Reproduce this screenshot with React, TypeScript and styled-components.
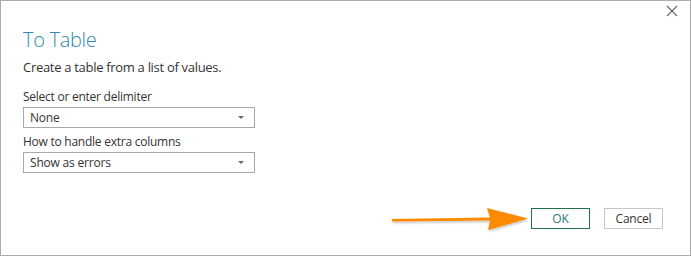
import React from "react"
import styled, { createGlobalStyle } from "styled-components"

const GlobalStyle = createGlobalStyle`
  html, body {
    margin: 0;
    padding: 0;
    background: #ffffff;
  }
  body {
    font-family: "Segoe UI", "Open Sans", "Noto Sans", sans-serif;
  }
`

type SelectProps = {
  value: string,
}

function Select({ value }: SelectProps): JSX.Element {
  return (
    <SelectBox>
      <SelectValue>{value}</SelectValue>
      <Caret />
    </SelectBox>
  )
}

function CloseIcon(): JSX.Element {
  return (
    <svg width="12" height="12" viewBox="0 0 12 12">
      <path d="M1 1 L11 11 M11 1 L1 11" stroke="#6f6f6f" strokeWidth="1.3" fill="none" />
    </svg>
  )
}

function PointerArrow(): JSX.Element {
  return (
    <ArrowSvg width="150" height="40" viewBox="0 0 150 40">
      <defs>
        <filter id="arrow-shadow" x="-10%" y="-40%" width="120%" height="180%">
          <feDropShadow dx="1" dy="1.5" stdDeviation="1.2" floodColor="#000" floodOpacity="0.25" />
        </filter>
      </defs>
      <path
        d="M2 19 L100 17.6 L97 8 L138 18.5 L98 30 L100 20.6 L2 21.4 Z"
        fill="#fd8a00"
        filter="url(#arrow-shadow)"
      />
    </ArrowSvg>
  )
}

export default function App(): JSX.Element {
  return (
    <>
      <GlobalStyle />
      <Dialog>
        <CloseButton aria-label="Close">
          <CloseIcon />
        </CloseButton>
        <Body>
          <Title>To Table</Title>
          <Description>Create a table from a list of values.</Description>
          <Fields>
            <Field>
              <Label>Select or enter delimiter</Label>
              <Select value="None" />
            </Field>
            <Field>
              <Label>How to handle extra columns</Label>
              <Select value="Show as errors" />
            </Field>
          </Fields>
        </Body>
        <Footer>
          <PointerArrow />
          <Button primary>OK</Button>
          <Button>Cancel</Button>
        </Footer>
      </Dialog>
    </>
  )
}

const Dialog = styled.div`
  position: relative;
  box-sizing: border-box;
  width: 691px;
  height: 256px;
  border: 1px solid #acacac;
  background: #ffffff;
  display: flex;
  flex-direction: column;
  justify-content: space-between;
  color: #333333;
`

const CloseButton = styled.div`
  position: absolute;
  top: 4px;
  right: 12px;
  width: 12px;
  height: 12px;
  display: flex;
`

const Body = styled.div`
  padding: 25px 0 0 22px;
  display: flex;
  flex-direction: column;
`

const Title = styled.h1`
  margin: 0;
  font-size: 20px;
  font-weight: 300;
  line-height: 27px;
  color: #2f89b0;
  letter-spacing: -0.3px;
`

const Description = styled.p`
  margin: 5px 0 0;
  font-size: 13px;
  line-height: 18px;
  letter-spacing: -0.3px;
  color: #333333;
`

const Fields = styled.div`
  margin-top: 13px;
  display: flex;
  flex-direction: column;
  gap: 6px;
`

const Field = styled.div`
  display: flex;
  flex-direction: column;
  gap: 2px;
`

const Label = styled.label`
  font-size: 12px;
  line-height: 16px;
  letter-spacing: -0.25px;
  color: #333333;
`

const SelectBox = styled.div`
  box-sizing: border-box;
  width: 232px;
  height: 21px;
  border: 1px solid #a9a9a9;
  display: flex;
  align-items: center;
  justify-content: space-between;
  padding: 0 10px 0 6px;
`

const SelectValue = styled.span`
  font-size: 12px;
  letter-spacing: -0.2px;
  color: #333333;
`

const Caret = styled.span`
  width: 0;
  height: 0;
  border-left: 3px solid transparent;
  border-right: 3px solid transparent;
  border-top: 3px solid #6a6a6a;
`

const Footer = styled.div`
  display: flex;
  align-items: center;
  justify-content: flex-end;
  gap: 14px;
  padding: 0 27px 26px 0;
`

const ArrowSvg = styled.svg`
  position: absolute;
  left: 389px;
  top: 199px;
`

const Button = styled.div<{ primary?: boolean }>`
  box-sizing: border-box;
  width: 59px;
  height: 21px;
  display: flex;
  align-items: center;
  justify-content: center;
  border: 1px solid ${(p) => (p.primary ? "#217346" : "#c6c6c6")};
  font-size: 12px;
  letter-spacing: -0.2px;
  color: ${(p) => (p.primary ? "#2a7a6f" : "#333333")};
`
